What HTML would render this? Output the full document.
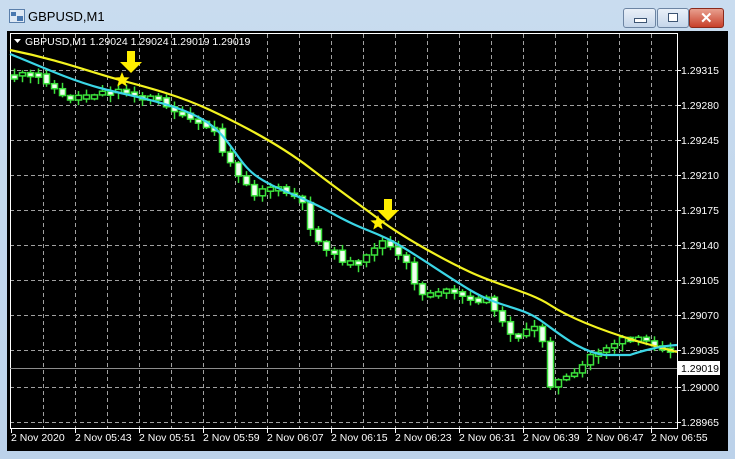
<!DOCTYPE html>
<html><head><meta charset="utf-8"><style>
html,body{margin:0;padding:0;width:735px;height:459px;overflow:hidden;background:#c3d7ec;font-family:"Liberation Sans",sans-serif}
.win{position:absolute;left:0;top:0;width:735px;height:459px;background:linear-gradient(#c9dcef,#bcd2ea)}
.title{position:absolute;left:28px;top:9px;font-size:13px;color:#000}
.btn{position:absolute;top:8px;height:18px;border:1px solid #6d85a3;border-radius:3px;background:linear-gradient(#e9f0f8,#c5d6ea)}
.chart{position:absolute;left:7px;top:31px;width:721px;height:420px;background:#000}
svg text{font-family:"Liberation Sans",sans-serif}
</style></head><body>
<div class="win">
<svg style="position:absolute;left:9px;top:9px" width="16" height="15"><rect x="0.5" y="0.5" width="15" height="13" fill="#dfe9f5" stroke="#5a7fab"/><rect x="2" y="3" width="5" height="4" fill="#4a78b0"/><rect x="8" y="7" width="6" height="5" fill="#4a78b0"/></svg>
<div class="title">GBPUSD,M1</div>
<div class="btn" style="left:623px;width:31px"><div style="position:absolute;left:10px;top:9px;width:11px;height:3px;background:#fff;border:1px solid #3d5573"></div></div>
<div class="btn" style="left:657px;width:30px"><div style="position:absolute;left:10px;top:4px;width:8px;height:7px;border:1px solid #3d5573;background:#fff"></div></div>
<div class="btn" style="left:689px;width:33px;background:linear-gradient(#e8a08f,#c8402a);border-color:#8a2a1c"><div style="position:absolute;left:10px;top:0px;color:#fff;font-weight:bold;font-size:15px">✕</div></div>
<div class="chart"></div>
<svg id="s" style="position:absolute;left:0;top:0" width="735" height="459"></svg>
</div>
<script>
var s=document.getElementById('s'),h='';
for(var x=43;x<677;x+=32)h+='<line x1="'+x+'.5" y1="34" x2="'+x+'.5" y2="428" stroke="#a0a0a0" stroke-dasharray="4,3"/>';
var ys=[70,105,140,175,210,245,280,315,350,387,422],lb=["1.29315","1.29280","1.29245","1.29210","1.29175","1.29140","1.29105","1.29070","1.29035","1.29000","1.28965"];
for(var i=0;i<ys.length;i++){h+='<line x1="10" y1="'+ys[i]+'.5" x2="677" y2="'+ys[i]+'.5" stroke="#a0a0a0" stroke-dasharray="4,3"/>';
h+='<line x1="677" y1="'+ys[i]+'.5" x2="681" y2="'+ys[i]+'.5" stroke="#fff"/><text x="681" y="'+(ys[i]+4)+'" fill="#fff" font-size="10.5">'+lb[i]+'</text>';}
h+='<rect x="10.5" y="33.5" width="667" height="395" fill="none" stroke="#fff"/>';
var tl=["2 Nov 2020","2 Nov 05:43","2 Nov 05:51","2 Nov 05:59","2 Nov 06:07","2 Nov 06:15","2 Nov 06:23","2 Nov 06:31","2 Nov 06:39","2 Nov 06:47","2 Nov 06:55"];
for(var i=0;i<tl.length;i++){var x=11+64*i;h+='<line x1="'+x+'.5" y1="428" x2="'+x+'.5" y2="433" stroke="#fff"/><text x="'+x+'" y="441" fill="#fff" font-size="10.5">'+tl[i]+'</text>';}
h+='<line x1="10" y1="368.5" x2="677" y2="368.5" stroke="#8c8c8c"/><rect x="677" y="361" width="43" height="14" fill="#fff"/><text x="681" y="372" fill="#000" font-size="10.5">1.29019</text>';
var kp=[[10,75],[40,75],[50,85],[65,100],[80,95],[100,92],[120,90],[140,95],[160,100],[180,115],[200,125],[215,130],[225,160],[240,175],[255,195],[265,185],[280,190],[300,200],[315,240],[330,250],[345,262],[360,265],[375,245],[385,240],[395,255],[405,262],[420,295],[435,290],[450,292],[470,300],[490,300],[505,330],[520,335],[540,325],[548,385],[560,380],[575,375],[590,355],[600,350],[620,340],[640,340],[660,345],[677,350]];
function f(x){for(var i=1;i<kp.length;i++)if(x<=kp[i][0]){var a=kp[i-1],b=kp[i];return a[1]+(b[1]-a[1])*(x-a[0])/(b[0]-a[0]);}return 350;}
var seed=11;function r(){seed=(seed*9301+49297)%233280;return seed/233280;}
var prev=f(8);
for(var x=14;x<677;x+=8){var c=f(x)+(r()-0.5)*6;var o=prev;var t=Math.min(o,c),b=Math.max(o,c);if(b-t<3){b=t+4;}
var hi=t-1-r()*6,lo=b+1+r()*7;
h+='<line x1="'+x+'.5" y1="'+hi+'" x2="'+x+'.5" y2="'+lo+'" stroke="#3ce23c" stroke-width="1.5"/>';
h+='<rect x="'+(x-2.5)+'" y="'+t+'" width="6" height="'+(b-t)+'" fill="'+(c>o?'#f0fff0':'#000')+'" stroke="#3ce23c" stroke-width="1.5"/>';prev=c;}
h+='<path fill="none" stroke="#f3f320" stroke-width="2.2" d="M10,50 C60,60 90,72 120,80 S180,96 210,110 S280,145 310,168 S360,205 380,220 S440,258 470,272 S530,292 550,305 S600,330 640,342 L677,352"/>';
h+='<path fill="none" stroke="#3bd6e6" stroke-width="2.2" d="M10,54 C40,66 70,80 100,88 S170,102 200,118 S235,160 255,175 S300,195 330,212 S370,230 390,240 S440,272 470,290 S520,306 540,320 S580,352 605,355 L630,355 S655,346 677,345"/>';
function arrow(x,y){return '<path d="M'+(x-4)+','+y+' h8 v11 h7 l-11,11 l-11,-11 h7z" fill="#ffee00"/>';}
function star(x,y){var p='';for(var i=0;i<10;i++){var a=Math.PI/5*i-Math.PI/2,rr=i%2?3.5:8;p+=(x+rr*Math.cos(a)).toFixed(1)+','+(y+rr*Math.sin(a)).toFixed(1)+' ';}return '<polygon points="'+p+'" fill="#ffee00"/>';}
h+=arrow(131,51)+star(122,80)+arrow(388,199)+star(378,223);
h+='<path d="M14,39 h7 l-3.5,4z" fill="#fff"/><text x="25" y="45" fill="#fff" font-size="10.5">GBPUSD,M1  1.29024 1.29024 1.29019 1.29019</text>';
s.innerHTML=h;
</script>
</body></html>
